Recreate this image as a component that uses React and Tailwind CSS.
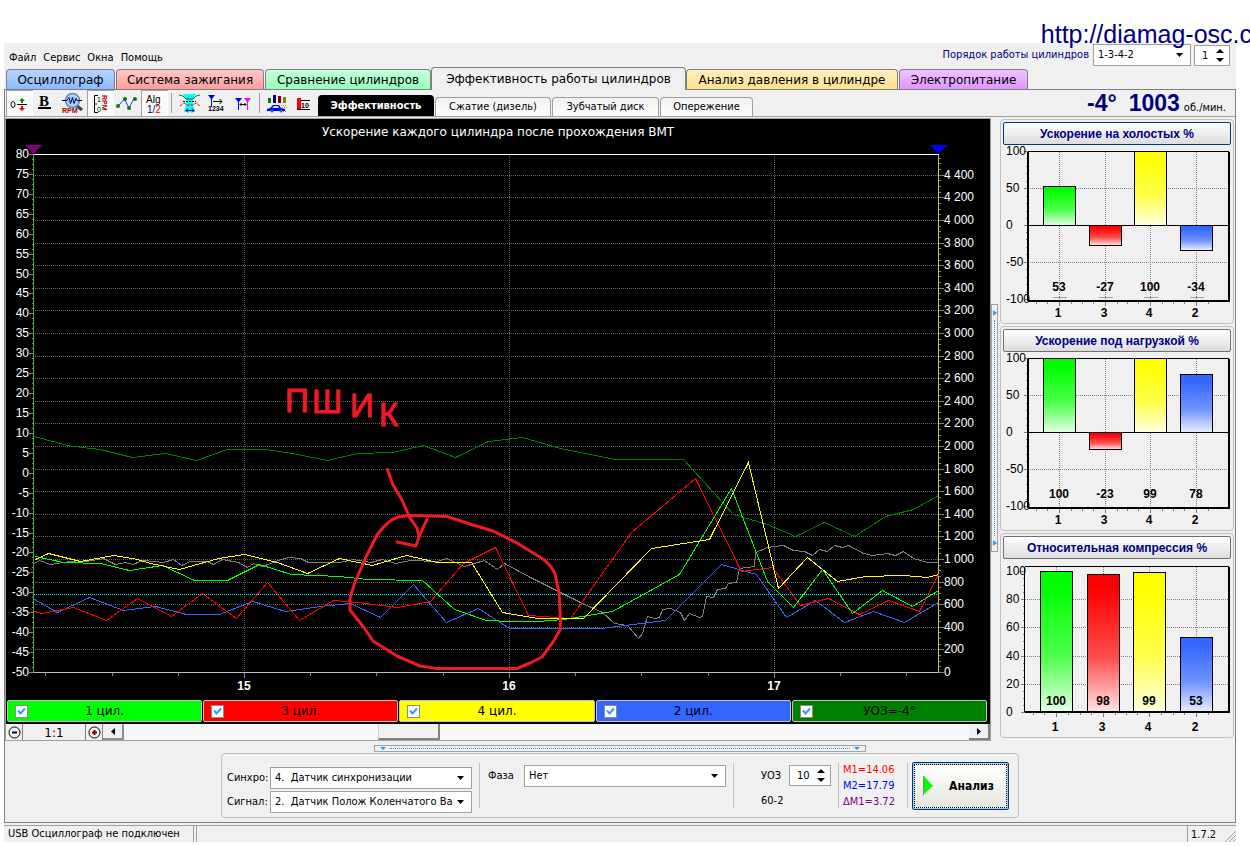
import { clsx } from 'clsx';

const UI = "font-['DejaVu_Sans_Condensed','DejaVu_Sans',sans-serif]";
const WIDE = "font-['DejaVu_Sans',sans-serif]";
const ARIAL = "font-['Liberation_Sans',sans-serif]";

const mainTabs = [
    { label: 'Осциллограф', look: 'w-[109px] from-[#b5d5ff] to-[#8cbaff]' },
    { label: 'Система зажигания', look: 'w-[148px] from-[#ffcaca] to-[#ff9c9c]' },
    { label: 'Сравнение цилиндров', look: 'w-[166px] from-[#c4ffdb] to-[#95ffbc]' },
    { label: 'Эффективность работы цилиндров', active: true, look: 'w-[255px]' },
    { label: 'Анализ давления в цилиндре', look: 'w-[212px] from-[#ffefc0] to-[#ffe08a]' },
    { label: 'Электропитание', look: 'w-[129px] from-[#eec4ff] to-[#df95ff]' },
];

const subTabs = [
    { label: 'Эффективность', active: true, look: 'w-[116px]' },
    { label: 'Сжатие (дизель)', look: 'w-[116px]' },
    { label: 'Зубчатый диск', look: 'w-[107px]' },
    { label: 'Опережение', look: 'w-[93px]' },
];

const legend = [
    { label: '1 цил.', look: 'bg-[#00ff00]' },
    { label: '3 цил.', look: 'bg-[#ff0000]' },
    { label: '4 цил.', look: 'bg-[#ffff00]' },
    { label: '2 цил.', look: 'bg-[#3366ff]' },
    { label: 'УОЗ=-4°', look: 'bg-[#008000]' },
];

const series = [
    {
        color: '#808080',
        points:
            '34,563 39,560 50,564 70,561 80,562 103,558 115,564 125,562 132,564 143,560 163,562 173,559 181,565 190,561 207,561 213,564 222,559 238,562 247,567 253,563 262,566 278,560 288,557 300,558 308,562 339,562 353,559 370,562 382,559 395,563 410,560 437,561 446,558 464,566 484,560 497,569 504,563 530,577 560,592 580,602 602,612 614,623 627,625 638,638 642,633 647,616 654,618 659,617 662,609 670,608 680,612 684,620 689,613 699,617 702,616 706,596 713,597 717,589 725,588 728,583 736,582 739,568 754,566 755,552 767,547 783,545 793,550 804,551 812,555 819,549 827,551 834,545 842,547 848,545 863,553 872,555 887,553 895,555 903,551 913,558 927,562 938,562',
    },
    {
        color: '#008000',
        points:
            '34,436 67,445 82,447 100,449 132,457 165,453 196,460 227,449 265,449 292,453 327,460 357,453 392,452 423,445 455,457 488,441 522,437 560,448 615,459 683,459 733,514 767,524 795,536 824,522 854,536 885,516 913,509 938,495',
    },
    {
        color: '#3366ff',
        points:
            '34,599 57,612 89,597 123,610 155,606 186,614 219,614 252,601 285,611 320,606 350,603 380,617 413,584 446,622 478,608 509,628 600,628 665,620 721,564 756,574 786,617 815,600 844,622 873,611 904,622 938,602',
    },
    {
        color: '#ff0000',
        points:
            '34,611 42,613 73,607 106,620 137,598 171,616 202,593 236,618 267,582 299,620 333,600 357,602 397,607 430,601 463,563 495,547 528,615 570,618 631,532 695,478 741,571 772,567 800,605 828,598 859,614 888,600 919,611 938,574',
    },
    {
        color: '#00ff00',
        points:
            '35,556 63,562 100,563 129,570 162,565 194,580 227,580 259,564 291,574 339,576 367,579 422,580 454,609 486,620 510,621 537,621 563,619 612,611 679,574 731,488 767,581 793,607 822,569 852,613 882,590 912,606 938,590',
    },
    {
        color: '#ffff00',
        points:
            '35,559 48,553 80,561 113,555 137,559 150,563 179,569 218,558 244,554 277,562 307,573 339,558 372,565 406,555 437,562 471,562 502,612 537,618 583,618 651,548 709,539 748,462 778,588 807,557 837,581 865,576 903,575 927,577 938,574',
    },
];

const range = (from, to, step) => {
    const out = [];
    for (let v = from; v <= to; v += step) out.push(v);
    return out;
};

const leftY = (v) => 672 - Math.round(((v + 50) * 518) / 130);
const rightY = (v) => 672 - Math.round(v * 0.113);
const thousands = (v) => (v < 1000 ? `${v}` : `${Math.floor(v / 1000)} ${String(v % 1000).padStart(3, '0')}`);

const MainChart = () => (
    <svg viewBox="6 119 984 580" className={clsx('block w-full', ARIAL)} role="img" aria-label="График ускорения">
        <text x="498" y="136" textAnchor="middle" fontSize="12" fill="#fff" className={WIDE}>
            Ускорение каждого цилиндра после прохождения ВМТ
        </text>
        <g transform="translate(.5 .5)" fill="none" shapeRendering="crispEdges">
            <g stroke="#606060" strokeDasharray="1 1">
                {range(200, 4400, 200).map((v) => (
                    <path key={v} d={`M34 ${rightY(v)}H938`} />
                ))}
                {[244, 509, 774].map((x) => (
                    <path key={x} d={`M${x} 155V672`} />
                ))}
            </g>
            <g stroke="#808080">
                {range(-50, 80, 5).map((v) => (
                    <path key={v} d={`M28 ${leftY(v)}H33`} />
                ))}
                {range(-50, 80, 1.25).map((v) => (
                    <path key={v} d={`M31 ${leftY(v)}H33`} />
                ))}
                {range(0, 4400, 200).map((v) => (
                    <path key={v} d={`M938 ${rightY(v)}H943`} />
                ))}
                {range(0, 4550, 50).map((v) => (
                    <path key={v} d={`M938 ${rightY(v)}H940`} />
                ))}
                {[45, 112, 178, 310, 376, 443, 575, 641, 708, 840, 906].map((x) => (
                    <path key={x} d={`M${x} 672V675`} />
                ))}
                {[244, 509, 774].map((x) => (
                    <path key={x} d={`M${x} 672V677`} />
                ))}
            </g>
            <path d="M33 154H938" stroke="#fff" />
            <path d="M33 672H938" stroke="#c0c0c0" />
            <path d="M33 154V672" stroke="#3cb043" />
            <path d="M938 154V672" stroke="#c8c832" />
            {series.map((s) => (
                <polyline key={s.color} points={s.points} stroke={s.color} />
            ))}
        </g>
        <line x1="34" y1="594.500" x2="938" y2="594.500" stroke="#00ffff" strokeDasharray="1 1" />
        <path d="M25 145H42L33.500 154Z" fill="#800080" />
        <path d="M930 145H947L938.500 154Z" fill="#0000ff" />
        <g fontSize="12" fill="#fff">
            {range(-50, 80, 5).map((v) => (
                <text key={v} x="29" y={leftY(v) + 4} textAnchor="end">
                    {v}
                </text>
            ))}
            {range(0, 4400, 200).map((v) => (
                <text key={v} x="944" y={rightY(v) + 4}>
                    {thousands(v)}
                </text>
            ))}
            {[15, 16, 17].map((v, i) => (
                <text key={v} x={244 + i * 265} y="690" textAnchor="middle" fontWeight="700">
                    {v}
                </text>
            ))}
        </g>
        {/* marker pen notes over the plot */}
        <text x="285 312 350 379" y="412 413 417 426" fontSize="33" fill="#ed1c24" stroke="#ed1c24">
            ПШИК
        </text>
        <g fill="none" stroke="#ed1c24" strokeWidth="3" strokeLinecap="round" strokeLinejoin="round">
            <path d="M398 517L410 515.500L447 516.500L473 525L493 531L517 543L543 559Q552 566 555 574L559 592L560.500 620L560 630L553 642L542 657L530 663L517 668.500H437L420 666L397 656L373 641L365 629L350 610V598L355 582L367 555L377 535Q388 520 398 517Z" />
            <path d="M387.500 469.500L393 485L401 498L410 518L417 528L419 537L427 519M419 537L416 546L397 542" />
        </g>
    </svg>
);

const BAR_COLORS = { 1: '#00ff00', 3: '#ff0000', 4: '#ffff00', 2: '#3366ff' };

const BarPanel = ({ id, title, focused, min, left, xs, bars, step, minor, marks }) => {
    const top = min < 0 ? 6 : 7;
    const bottom = min < 0 ? 155 : 152;
    const y = (v) => (min < 0 ? 80 - Math.trunc(v * 0.749) : 153 - Math.round(v * 1.41));
    return (
        <section className="rounded border border-[#c0c0c0] p-[2px] pb-0">
            <button
                className={clsx(
                    'block h-[23px] w-full rounded-xs border bg-linear-to-b from-white to-[#dcdcdc] text-[12px] font-bold text-[#000080]',
                    ARIAL,
                    focused ? 'border-[#003c74]' : 'border-[#707070]'
                )}
            >
                {title}
            </button>
            <svg viewBox="0 0 228 178" className={clsx('block w-full', ARIAL)} role="img" aria-label={title}>
                <defs>
                    {bars.map((b) => (
                        <linearGradient key={b.n} id={`${id}-${b.n}`} x1="0" y1="0" x2="0" y2="1">
                            <stop offset="0.100" stopColor={BAR_COLORS[b.n]} />
                            <stop offset="0.600" stopColor={BAR_COLORS[b.n]} stopOpacity="0.700" />
                            <stop offset="1" stopColor={BAR_COLORS[b.n]} stopOpacity="0.100" />
                        </linearGradient>
                    ))}
                </defs>
                <g transform="translate(.5 .5)" shapeRendering="crispEdges" fill="none">
                    <g stroke="#808080">
                        {range(min, 100, step).map((v) => (
                            <path key={v} d={`M${left - 4} ${y(v)}H${left}`} />
                        ))}
                        {range(min, 100, minor).map((v) => (
                            <path key={v} d={`M${left - 2} ${y(v)}H${left}`} />
                        ))}
                        {range(min + step, 100 - (min < 0 ? step : 20), step).map((v) => (
                            <path key={v} d={`M${left} ${y(v)}H225`} strokeDasharray="1 1" />
                        ))}
                        {xs.map((x) => (
                            <path key={x} d={`M${x} ${top}V${bottom}`} strokeDasharray="1 1" />
                        ))}
                        {xs.map((x) => (
                            <path key={x} d={`M${x} ${bottom}V${bottom + 5}M${x - 23} ${bottom}V${bottom + 3}M${x - 12} ${bottom}V${bottom + 3}M${x + 12} ${bottom}V${bottom + 3}`} />
                        ))}
                    </g>
                    {bars.map((b, i) => (
                        <g key={b.n}>
                            <rect x={xs[i] - 16} y={Math.min(y(b.v), y(0))} width="32" height={Math.abs(y(b.v) - y(0))} fill="#fff" />
                            <rect
                                x={xs[i] - 16}
                                y={Math.min(y(b.v), y(0))}
                                width="32"
                                height={Math.abs(y(b.v) - y(0))}
                                fill={`url(#${id}-${b.n})`}
                                stroke="#000"
                            />
                            {marks && <path d={`M${xs[i] - 7} ${bottom - 3}H${xs[i] + 7}`} stroke="#a0a0a0" />}
                        </g>
                    ))}
                    <path d={`M${left} ${y(0)}H225M${left} ${top}H225M${left} ${top}V${bottom}`} stroke="#000" />
                    <path d={`M${left} ${bottom}H225V${top}`} stroke="#000" strokeWidth="2" />
                    {min < 0 && <path d={`M${left} ${top}V${bottom}`} stroke="#000" strokeWidth="2" />}
                </g>
                <g fontSize="12">
                    {range(min, 100, step).map((v) => (
                        <text key={v} x="3" y={y(v) + 4}>
                            {v}
                        </text>
                    ))}
                </g>
                <g fontSize="12" fontWeight="700" textAnchor="middle">
                    {bars.map((b, i) => (
                        <text key={b.n} x={xs[i]} y="146">
                            {b.v}
                        </text>
                    ))}
                    {bars.map((b, i) => (
                        <text key={b.n} x={xs[i] - 1} y="172">
                            {b.n}
                        </text>
                    ))}
                </g>
            </svg>
        </section>
    );
};

const tools = [
    {
        name: 'Ноль',
        pressed: true,
        art: (
            <>
                <ellipse cx="7" cy="14.500" rx="2" ry="3" fill="none" stroke="#000" />
                <path d="M11 14.500H21" stroke="#000" />
                <path d="M16 8l3 3h-2v2h-2v-2h-2z" fill="#008000" />
                <path d="M16 21l3-3h-2v-2h-2v2h-2z" fill="#ff0000" />
            </>
        ),
    },
    {
        name: 'Жирные линии',
        art: (
            <>
                <text x="6" y="16" fontSize="15" fontWeight="700" className="font-['Liberation_Serif',serif]">
                    B
                </text>
                <path d="M5 18H18" stroke="#000" strokeWidth="2" />
            </>
        ),
    },
    {
        name: 'Обороты',
        art: (
            <>
                <path d="M16 15l6 5" stroke="#404050" strokeWidth="3" />
                <circle cx="12.500" cy="10.500" r="7" fill="#a8d0f0" stroke="#7088a0" strokeWidth="1.500" />
                <path d="M2 10.500H7l2-3 1.500 6 2-6 1.500 6 2-5 1 2H22" fill="none" stroke="#000080" />
                <text x="2" y="23" fontSize="7" fontWeight="700" fill="#a00000">
                    RPM
                </text>
            </>
        ),
    },
    {
        name: 'Шкала оборотов',
        pressed: true,
        art: (
            <>
                <path d="M11 5.500H7.500V22.500H11M7.500 14H10" fill="none" stroke="#000" />
                <text x="10" y="12" fontSize="7">
                    1
                </text>
                <text x="10" y="22" fontSize="7">
                    0
                </text>
                <text transform="translate(15 5) rotate(90)" fontSize="7" fontWeight="700" fill="#a00000">
                    RPM
                </text>
            </>
        ),
    },
    {
        name: 'Точки',
        art: (
            <>
                <path d="M4 16L10.500 9L15 18L20 8.500" fill="none" stroke="#3030ff" />
                <g fill="#008000">
                    <circle cx="4" cy="16" r="2" />
                    <circle cx="11" cy="9" r="2" />
                    <circle cx="15" cy="18" r="2" />
                    <circle cx="21" cy="9" r="2" />
                </g>
            </>
        ),
    },
    {
        name: 'Алгоритм',
        pressed: true,
        art: (
            <>
                <text x="5" y="13" fontSize="10">
                    Alg
                </text>
                <text x="6" y="23" fontSize="10" fill="#000080">
                    1/<tspan fill="#ff0000">2</tspan>
                </text>
            </>
        ),
    },
    {
        name: 'Зона',
        gap: true,
        art: (
            <>
                <path d="M8 4H21L18 9V14L20 22H9L11 14V9Z" fill="#00ffff" />
                <path d="M4 5l4 1 3 3h7l3-3 4-1" fill="none" stroke="#008000" />
                <path d="M8 11.500H21" stroke="#000" strokeDasharray="2 1" />
                <path d="M5 16l4-3 3 2h6l3-2 4 3" fill="none" stroke="#ff0000" strokeDasharray="3 1" />
                <path d="M11 20.500H19M13 18.500l-2 2 2 2M17 18.500l2 2-2 2" fill="none" stroke="#000080" />
            </>
        ),
    },
    {
        name: 'Метки тактов',
        art: (
            <>
                <path d="M6 5H13L10 9V17H9V9Z" fill="#0000ff" />
                <path d="M11 11.500H20M17.500 9l2.500 2.500-2.500 2.500" fill="none" stroke="#000" />
                <text x="6" y="21" fontSize="7" fontWeight="700">
                    1234
                </text>
            </>
        ),
    },
    {
        name: 'Маркеры',
        art: (
            <>
                <path d="M6 8H13L10 12V20H9V12Z" fill="#0000ff" />
                <path d="M15 8H22L19 12V20H18V12Z" fill="#ff00ff" />
                <path d="M11 14.500H17M12.500 13l-1.500 1.500 1.500 1.500M15.500 13l1.500 1.500-1.500 1.500" fill="none" stroke="#000" />
            </>
        ),
    },
    {
        name: 'Разгон',
        gap: true,
        art: (
            <>
                <path d="M5 8h3v5h-3z" fill="#008000" />
                <path d="M10 5h3v8h-3z" fill="#000090" />
                <path d="M15 6h3v7h-3z" fill="#800000" />
                <path d="M20 7h3v6h-3z" fill="#808000" />
                <path d="M4 19l3-1 3-3h6l2 3 4 1v2H4z" fill="#0000ff" />
                <path d="M9 18l2-2h4l1 2z" fill="#c0e0ff" />
                <path d="M18 15.500H23M19 17.500H24M20 21.500H24" stroke="#909090" strokeDasharray="1 1" />
                <circle cx="9" cy="21" r="1.500" fill="#008080" />
                <circle cx="18" cy="21" r="1.500" fill="#008080" />
            </>
        ),
    },
    {
        name: 'Уровень',
        art: (
            <>
                <path d="M7 8h4v11h-4z" fill="#ff0000" />
                <path d="M11 10.500H20M7 19.500H20" stroke="#000" />
                <text x="11" y="18" fontSize="7" fontWeight="700">
                    10
                </text>
            </>
        ),
    },
];

const ToolButton = ({ name, pressed, gap, art }) => (
    <>
        {gap && <span className="mx-[3px] my-[3px] w-px bg-[#a0a0a0]" />}
        <button
            aria-label={name}
            aria-pressed={!!pressed}
            className={clsx(
                'h-[26px] w-[27px] shrink-0',
                pressed && 'bg-[#f9f9f9] shadow-[inset_1px_1px_#a0a0a0,inset_-1px_-1px_#fff]'
            )}
        >
            <svg width="27" height="26" className={ARIAL}>
                {art}
            </svg>
        </button>
    </>
);

const Combo = ({ id, value, className }) => (
    <span className={clsx('relative block', className)}>
        <select
            id={id}
            defaultValue={value}
            className={clsx('block h-[22px] w-full appearance-none border border-[#a0a0a0] bg-white pl-1 text-[11px] text-black', UI)}
        >
            <option>{value}</option>
        </select>
        <svg width="7" height="4" className="pointer-events-none absolute top-[9px] right-[8px]">
            <path d="M0 0H7L3.500 4Z" />
        </svg>
    </span>
);

const Spinner = ({ id, label, value, className }) => (
    <span className={clsx('relative block', className)}>
        <input
            id={id}
            aria-label={label}
            defaultValue={value}
            className={clsx('block h-[21px] w-full border border-[#a0a0a0] bg-white pl-[7px] text-[11px] text-black', UI)}
        />
        <svg width="8" height="13" className="pointer-events-none absolute top-[4px] right-[6px]">
            <path d="M0 4H8L4 0ZM0 9H8L4 13Z" />
        </svg>
    </span>
);

const Divider = () => <span className="my-[9px] w-px bg-[#c0c0c0]" />;

const ScrollBar = () => (
    <div className="flex h-4 items-stretch">
        <button aria-label="Уменьшить" className="flex w-[17px] items-center justify-center border-r border-[#808080]">
            <svg width="13" height="13" fill="none">
                <circle cx="6.500" cy="6.500" r="5.500" stroke="#000" />
                <path d="M4 6.500H9" stroke="#000080" strokeWidth="2" />
            </svg>
        </button>
        <button className={clsx('w-[63px] border-r border-[#808080] pt-[2px] text-[12px] leading-[14px]', WIDE)}>1:1</button>
        <button aria-label="Увеличить" className="flex w-[17px] items-center justify-center border-r border-[#808080]">
            <svg width="13" height="13" fill="none">
                <circle cx="6.500" cy="6.500" r="5.500" stroke="#000" />
                <path d="M4 6.500H9M6.500 4V9" stroke="#800000" strokeWidth="2" />
            </svg>
        </button>
        <button aria-label="Влево" className="flex w-[21px] items-center justify-center border-r-2 border-b-2 border-[#909090]">
            <svg width="4" height="7">
                <path d="M4 0V7L0 3.500Z" />
            </svg>
        </button>
        <div className="flex flex-1 bg-[#f8f8f8]">
            <span className="w-[30%]" />
            <span className="w-[62px] border-r-2 border-b-2 border-l border-[#808080] border-l-[#d0d0d0] bg-[#f0f0f0]" />
        </div>
        <button aria-label="Вправо" className="flex w-[21px] items-center justify-center border-r-2 border-b-2 border-[#808080]">
            <svg width="4" height="7">
                <path d="M0 0V7L4 3.500Z" />
            </svg>
        </button>
    </div>
);

const App = () => (
    <div className={clsx('overflow-x-hidden bg-white text-[11px] leading-[14px] text-black', UI)}>
        <header className="relative z-10 flex h-[43px] items-end justify-end">
            <a href="http://diamag-osc.c" className={clsx('-mr-[2px] text-[25px] leading-[18px] whitespace-nowrap text-[#000080]', ARIAL)}>
                http://diamag-osc.c
            </a>
        </header>

        <div className="mr-[14px] ml-1 bg-[#f0f0f0]">
            <div className="flex h-[24px] items-center pr-[6px] pl-[5px]">
                <nav className="flex flex-1 gap-[7px] pt-[6px]">
                    <a href="#file">Файл</a>
                    <a href="#service">Сервис</a>
                    <a href="#windows">Окна</a>
                    <a href="#help">Помощь</a>
                </nav>
                <label htmlFor="order" className="pr-1 text-[#000080]">
                    Порядок работы цилиндров
                </label>
                <Combo id="order" value="1-3-4-2" className="w-[98px]" />
                <Spinner id="first" label="Первый цилиндр" value="1" className="ml-[3px] w-[36px]" />
            </div>

            <div role="tablist" className={clsx('flex h-[22px] items-end pl-[2px]', WIDE)}>
                {mainTabs.map((tab) => (
                    <button
                        key={tab.label}
                        role="tab"
                        aria-selected={!!tab.active}
                        className={clsx(
                            'shrink-0 overflow-hidden rounded-t border border-b-0 border-[#808080] text-[12px] whitespace-nowrap',
                            tab.active ? 'relative -mb-px -ml-px h-[23px] bg-[#f0f0f0]' : 'mr-px h-[20px] bg-linear-to-b',
                            tab.look
                        )}
                    >
                        {tab.label}
                    </button>
                ))}
            </div>

            <main className="border border-[#808080]">
                <div className="flex h-[27px] items-stretch border-b border-[#a0a0a0] pl-px">
                    {tools.map((t) => (
                        <ToolButton key={t.name} {...t} />
                    ))}
                    <div role="tablist" className="ml-px flex flex-1 items-end gap-px">
                        {subTabs.map((tab) => (
                            <button
                                key={tab.label}
                                role="tab"
                                aria-selected={!!tab.active}
                                className={clsx(
                                    'shrink-0 rounded-t border border-b-0 whitespace-nowrap',
                                    tab.active
                                        ? 'h-[21px] border-black bg-black font-bold text-white'
                                        : 'h-[19px] border-[#a0a0a0] bg-linear-to-b from-[#f0f0f0] to-white',
                                    tab.look
                                )}
                            >
                                {tab.label}
                            </button>
                        ))}
                    </div>
                    <div className={clsx('flex items-baseline pr-[9px] text-[#000080]', ARIAL)}>
                        <b className="text-[23px] leading-[27px]">-4°</b>
                        <b className="ml-3 text-[23px] leading-[27px]">1003</b>
                        <span className={clsx('ml-1 text-black', UI)}>об./мин.</span>
                    </div>
                </div>

                <div className="mt-px flex pr-px">
                    <div className="min-w-0 flex-1 border border-[#a0a0a0]">
                        <div className="bg-black">
                            <MainChart />
                            <div className="flex gap-px px-px pt-px pr-[3px] pb-[2px]">
                                {legend.map((item) => (
                                    <label
                                        key={item.label}
                                        className={clsx(
                                            'relative flex h-[22px] flex-1 items-center justify-center rounded-xs border border-[#c0c0c0] text-[12px]',
                                            WIDE,
                                            item.look
                                        )}
                                    >
                                        <input
                                            type="checkbox"
                                            defaultChecked
                                            className="peer absolute top-[4px] left-[7px] size-[13px] appearance-none border border-[#8a8a8a] bg-white"
                                        />
                                        <svg
                                            width="9"
                                            height="9"
                                            className="pointer-events-none absolute top-[6px] left-[9px] hidden peer-checked:block"
                                        >
                                            <path d="M1 3.500L3.500 6.500L8 1.500" fill="none" stroke="#3399ff" strokeWidth="2" />
                                        </svg>
                                        {item.label}
                                    </label>
                                ))}
                            </div>
                        </div>
                        <ScrollBar />
                    </div>

                    <div className="flex w-[9px] items-center">
                        <div className="mb-1 flex h-[248px] w-[7px] flex-col items-center justify-between border border-[#a0a0a0] py-[5px]">
                            <svg width="4" height="6" fill="#3399ff">
                                <path d="M0 0L4 3L0 6Z" />
                            </svg>
                            <span className="my-1 w-px flex-1 border-l border-dotted border-[#3399ff]" />
                            <svg width="4" height="6" fill="#3399ff">
                                <path d="M0 0L4 3L0 6Z" />
                            </svg>
                        </div>
                    </div>

                    <aside className="flex w-[234px] flex-col gap-[2px] pt-px">
                        <BarPanel
                            id="idle"
                            title="Ускорение на холостых %"
                            focused
                            marks
                            min={-100}
                            step={50}
                            minor={10}
                            left={24}
                            xs={[56, 102, 147, 193]}
                            bars={[
                                { n: 1, v: 53 },
                                { n: 3, v: -27 },
                                { n: 4, v: 100 },
                                { n: 2, v: -34 },
                            ]}
                        />
                        <BarPanel
                            id="load"
                            title="Ускорение под нагрузкой %"
                            min={-100}
                            step={50}
                            minor={10}
                            left={24}
                            xs={[56, 102, 147, 193]}
                            bars={[
                                { n: 1, v: 100 },
                                { n: 3, v: -23 },
                                { n: 4, v: 99 },
                                { n: 2, v: 78 },
                            ]}
                        />
                        <BarPanel
                            id="compression"
                            title="Относительная компрессия %"
                            min={0}
                            step={20}
                            minor={5}
                            left={21}
                            xs={[53, 100, 146, 193]}
                            bars={[
                                { n: 1, v: 100 },
                                { n: 3, v: 98 },
                                { n: 4, v: 99 },
                                { n: 2, v: 53 },
                            ]}
                        />
                    </aside>
                </div>

                <div className="mx-auto mt-1 flex h-[7px] w-[492px] items-center border border-[#a0a0a0] px-[5px]">
                    <svg width="6" height="3" fill="#3399ff">
                        <path d="M0 0H6L3 3Z" />
                    </svg>
                    <span className="mx-1 flex-1 border-t border-dotted border-[#3399ff]" />
                    <svg width="6" height="3" fill="#3399ff">
                        <path d="M0 0H6L3 3Z" />
                    </svg>
                </div>

                <form className="mx-auto mt-px mb-1 flex h-[65px] w-[798px] rounded border border-[#c0c0c0] pl-[5px]">
                    <div className="mt-[13px] mr-[7px] grid grid-cols-[43px_202px] items-center gap-y-[2px] self-start">
                        <label htmlFor="sync">Синхро:</label>
                        <Combo id="sync" value={'4.\u00a0 Датчик синхронизации'} />
                        <label htmlFor="signal">Сигнал:</label>
                        <Combo id="signal" value={'2.\u00a0 Датчик Полож Коленчатого Ва'} />
                    </div>
                    <Divider />
                    <div className="mx-[7px] mt-[11px] flex items-center self-start">
                        <label htmlFor="phase" className="w-[37px] pl-px">
                            Фаза
                        </label>
                        <Combo id="phase" value="Нет" className="w-[202px]" />
                    </div>
                    <Divider />
                    <div className="ml-[27px] flex w-[77px] flex-col gap-2 pt-[11px]">
                        <div className="flex items-center">
                            <label htmlFor="uoz" className="w-[28px]">
                                УОЗ
                            </label>
                            <Spinner id="uoz" value="10" className="w-[42px]" />
                        </div>
                        <span>60-2</span>
                    </div>
                    <Divider />
                    <div className="w-[68px] pt-2 pl-[4px] leading-4">
                        <p className="text-[#ff0000]">M1=14.06</p>
                        <p className="text-[#0000ff]">M2=17.79</p>
                        <p className="text-[#800080]">ΔM1=3.72</p>
                    </div>
                    <Divider />
                    <button
                        type="button"
                        className="mt-2 ml-1 h-[48px] w-[97px] rounded-xs border border-[#003c74] bg-[#9cc8f8] p-px text-[12px] font-bold"
                    >
                        <span className="flex h-full items-center border border-dotted border-black bg-linear-to-b from-white to-[#e6e6de] pl-[7px]">
                            <svg width="11" height="20">
                                <path d="M1.500 0V19" stroke="#808080" />
                                <path d="M2 0L11 10L2 18Z" fill="#00ff00" />
                            </svg>
                            <span className="flex-1 pl-1">Анализ</span>
                        </span>
                    </button>
                </form>
            </main>

            <footer className="mt-[2px] flex h-[17px] items-stretch border-t border-[#a0a0a0]">
                <span className="w-[190px] border-r border-[#a0a0a0] pt-px pl-1">USB Осциллограф не подключен</span>
                <span className="ml-[2px] flex-1 border-x border-[#a0a0a0]" />
                <span className="flex w-[48px] items-end justify-between pl-[3px]">
                    1.7.2
                    <svg width="12" height="12" stroke="#a0a0a0">
                        <path d="M1 12L12 1M5 12L12 5M9 12L12 9" />
                    </svg>
                </span>
            </footer>
        </div>
    </div>
);

export default App;
